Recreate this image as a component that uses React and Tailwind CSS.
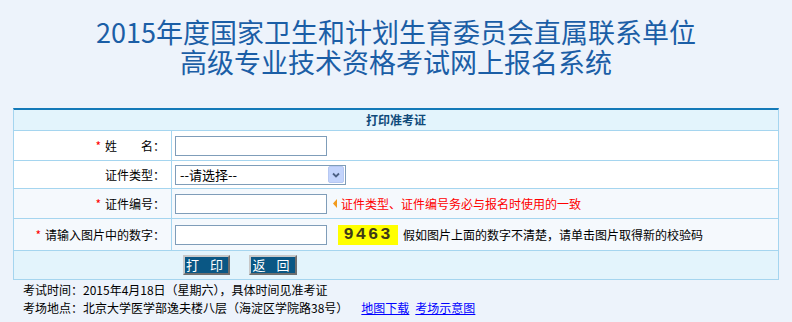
const cjk = "font-['Noto_Sans_CJK_SC',sans-serif]";

const Star = () => <span className="mr-[4px] text-[#ff0000]">*</span>;

const Label = ({ children }) => (
  <div className="flex w-[158px] shrink-0 items-center justify-end border-r border-[#a5d5ef] pr-[6px]">
    {children}
  </div>
);

const TextBox = ({ w = "w-[152px]" }) => (
  <div className={`${w} h-[20px] border border-[#7f9db9] bg-white`} />
);

export default function App() {
  return (
    <div className={`min-h-[322px] w-[792px] bg-[#edf3fb] text-[12px] text-black ${cjk}`}>
      {/* Title */}
      <div className="flex h-[108px] flex-col items-center pt-[17px] text-[27px] leading-[30px] text-[#1b5ea6]">
        <div>2015年度国家卫生和计划生育委员会直属联系单位</div>
        <div>高级专业技术资格考试网上报名系统</div>
      </div>

      {/* Form table */}
      <div className="mx-[13px] w-[766px] border-x border-t-2 border-x-[#a5d5ef] border-t-[#1479b8]">
        <div className="flex h-[21px] items-center justify-center border-b border-[#a5d5ef] bg-[#e3f4fc] font-bold text-[#104a7a]">
          打印准考证
        </div>

        <div className="flex h-[30px] border-b border-[#a5d5ef] bg-white">
          <Label>
            <Star />
            <span>姓　　名：</span>
          </Label>
          <div className="flex items-center pl-[3px]">
            <TextBox />
          </div>
        </div>

        <div className="flex h-[28px] border-b border-[#a5d5ef] bg-white">
          <Label>证件类型：</Label>
          <div className="flex items-center pl-[3px]">
            <div className="flex h-[20px] w-[171px] items-center justify-between border border-[#7f9db9] bg-white pl-[4px] pr-[1px]">
              <span className="text-[13px] leading-none">--请选择--</span>
              <div className="flex h-[17px] w-[16px] items-center justify-center rounded-[2px] border border-[#b7c8f2] bg-[#c3d4fc]">
                <svg width="8" height="6" viewBox="0 0 8 6">
                  <path d="M1 1.5 L4 4.5 L7 1.5" fill="none" stroke="#4d6185" strokeWidth="1.8" />
                </svg>
              </div>
            </div>
          </div>
        </div>

        <div className="flex h-[30px] border-b border-[#a5d5ef] bg-[#f5f9fd]">
          <Label>
            <Star />
            <span>证件编号：</span>
          </Label>
          <div className="flex items-center pl-[3px]">
            <TextBox />
            <svg className="ml-[6px] mr-[4px]" width="4" height="9" viewBox="0 0 4 9">
              <path d="M4 0 L0 4.5 L4 9 Z" fill="#f29a1c" />
            </svg>
            <span className="text-[#ff0000]">证件类型、证件编号务必与报名时使用的一致</span>
          </div>
        </div>

        <div className="flex h-[32px] border-b border-[#a5d5ef] bg-[#f5f9fd]">
          <Label>
            <Star />
            <span>请输入图片中的数字：</span>
          </Label>
          <div className="flex items-center pl-[3px]">
            <TextBox />
            <div className="ml-[11px] flex h-[20px] w-[60px] items-center justify-center bg-[#ffff00] font-['Liberation_Mono',monospace] text-[17px] font-bold tracking-[2px] text-[#3e3a18]">
              9463
            </div>
            <span className="ml-[5px]">假如图片上面的数字不清楚，请单击图片取得新的校验码</span>
          </div>
        </div>

        <div className="flex h-[29px] items-center gap-[19px] border-b border-[#a5d5ef] bg-[#e3f4fc] pl-[169px]">
          <button className="flex h-[20px] w-[47px] items-center justify-center border-2 border-b-[#6e6e6e] border-l-[#c8c8c8] border-r-[#6e6e6e] border-t-[#c8c8c8] bg-[#0a5784] text-[13px] tracking-[4px] text-white">
            打 印
          </button>
          <button className="flex h-[20px] w-[48px] items-center justify-center border-2 border-b-[#6e6e6e] border-l-[#c8c8c8] border-r-[#6e6e6e] border-t-[#c8c8c8] bg-[#0a5784] text-[13px] tracking-[4px] text-white">
            返 回
          </button>
        </div>
      </div>

      {/* Exam info */}
      <div className="pl-[23px] pt-[1px] leading-[18px]">
        <div>考试时间：2015年4月18日（星期六），具体时间见准考证</div>
        <div className="flex">
          <span>考场地点：北京大学医学部逸夫楼八层（海淀区学院路38号）</span>
          <a href="#" className="ml-[13px] text-[#0000ff] underline">地图下载</a>
          <a href="#" className="ml-[6px] text-[#0000ff] underline">考场示意图</a>
        </div>
      </div>
    </div>
  );
}
